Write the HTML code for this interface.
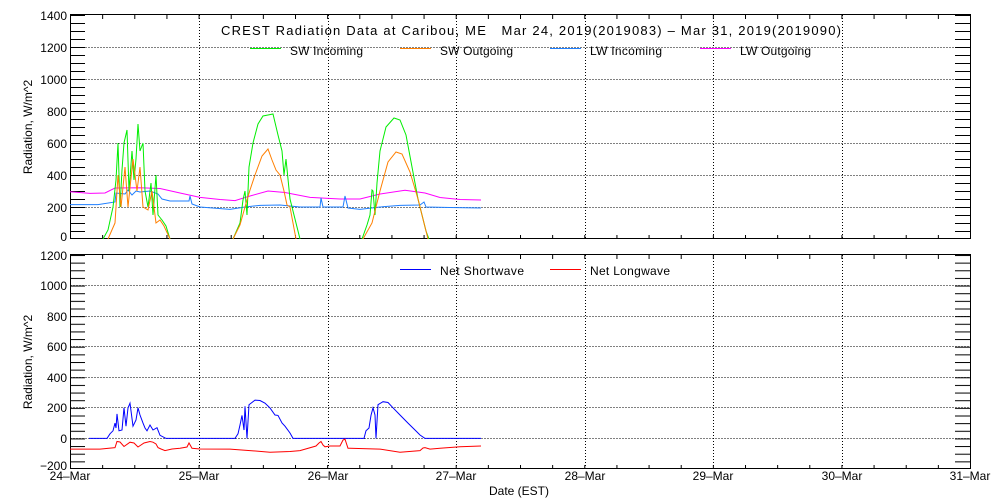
<!DOCTYPE html>
<html><head><meta charset="utf-8"><style>
html,body{margin:0;padding:0;background:#fff;}
svg{display:block;font-family:"Liberation Sans",sans-serif;font-size:12px;}
.pre{white-space:pre;}
</style></head><body>
<svg width="1000" height="500" viewBox="0 0 1000 500">
<defs>
<pattern id="ht" patternUnits="userSpaceOnUse" x="0" y="239" width="20" height="8"><rect x="0" y="0" width="20" height="1" fill="#000"/></pattern>
<pattern id="hb" patternUnits="userSpaceOnUse" x="0" y="469" width="20" height="7.643"><rect x="0" y="0" width="20" height="1" fill="#000"/></pattern>
<pattern id="vt" patternUnits="userSpaceOnUse" x="70" y="0" width="32.143" height="10"><rect x="0" y="0" width="1" height="10" fill="#000"/></pattern>
</defs>
<g fill="none" stroke="#000" stroke-width="1" stroke-dasharray="1,2">
<path d="M70.5 207.5H970M70.5 175.5H970M70.5 143.5H970M70.5 111.5H970M70.5 79.5H970M70.5 47.5H970"/>
<path d="M199.5 15V239M328.5 15V239M456.5 15V239M585.5 15V239M713.5 15V239M842.5 15V239"/>
<path d="M70.5 438.5H970M70.5 407.5H970M70.5 377.5H970M70.5 346.5H970M70.5 316.5H970M70.5 285.5H970"/>
<path d="M199.5 255V469M328.5 255V469M456.5 255V469M585.5 255V469M713.5 255V469M842.5 255V469"/>
</g>
<rect x="70" y="15" width="15" height="224" fill="url(#ht)"/>
<rect x="955" y="15" width="15" height="224" fill="url(#ht)"/>
<rect x="70" y="255" width="15" height="214" fill="url(#hb)"/>
<rect x="955" y="255" width="15" height="214" fill="url(#hb)"/>
<rect x="70" y="15" width="900" height="4" fill="url(#vt)"/>
<rect x="70" y="235" width="900" height="4" fill="url(#vt)"/>
<rect x="70" y="255" width="900" height="4" fill="url(#vt)"/>
<rect x="70" y="465" width="900" height="4" fill="url(#vt)"/>
<rect x="70.5" y="14.5" width="900" height="224" fill="none" stroke="#000"/>
<rect x="70.5" y="254.5" width="900" height="214" fill="none" stroke="#000"/>
<g fill="none" stroke-width="1">
<polyline stroke="#ff00ff" points="70,191.8 90,193.4 105,193 115,188 140,187.8 160,188.5 180,193 200,197.4 220,199.5 235,200.6 250,196 268,191 285,192.5 310,197.4 340,199 360,199 380,194 405,190.2 425,193 440,197.5 460,199.5 481,200"/>
<polyline stroke="#1e7fff" points="70,204.6 98,204.6 115,202 116,193 125,194 128,190 132,195 136,191 140,192 150,191 158,194 162,199 170,201 180,201 189,201 190,196 192,204 200,207 230,209.4 245,207 260,205.4 280,205 300,207 320,207 321,198 323,207 343,207 345,196 348,208 360,209.4 380,207 400,205.4 420,205 424,202 426,207 450,207.5 481,208"/>
<polyline stroke="#00ee00" points="103,239 108,230 113,207 116,180 118,143 120,207 122,170 124,143 127,130 129,191 132,151 134,180 136,159 138,124 140,151 143,143 145,191 148,207 151,183 153,215 156,175 158,215 162,220 166,226 170,239"/>
<polyline stroke="#00ee00" points="233,239 240,223 243,200 245,191 247,215 249,167 253,143 258,124 263,116 268,115 273,114 278,135 282,151 284,175 286,159 290,199 294,215 300,239"/>
<polyline stroke="#00ee00" points="362,239 367,225 370,215 372,190 373,191 375,215 377,183 380,151 386,127 394,118 400,120 406,135 412,167 418,199 422,215 426,231 429,239"/>
<polyline stroke="#ff7f00" points="108,239 115,223 118,175 121,207 125,167 128,207 133,159 137,191 140,167 143,207 148,210 152,191 156,223 160,220 164,226 170,239"/>
<polyline stroke="#ff7f00" points="233,239 240,225 245,207 250,190 255,175 262,156 268,149 272,160 276,170 280,175 284,191 287,205 290,207 296,239"/>
<polyline stroke="#ff7f00" points="363,239 372,223 380,191 388,162 396,152 402,154 410,172 418,199 424,223 428,239"/>
</g>
<g fill="none" stroke-width="1">
<polyline stroke="#0000ff" points="89,438.4 107,438.4 110,433.8 113,430.8 115,423.1 116,428 117,413.9 119,430.8 122,430 124,407.8 126,426.2 128,408 130,403.2 133,426.2 136,420 138,407.8 140,415 143,423.1 145,428 147,430.8 150,425 153,430 157,427.7 160,435.3 166,438.4 235,438.4 238,433.8 240,425 242,415.4 244,430 245,406.3 247,438.4 249,404.7 255,400.1 260,400.5 265,403.2 270,408 275,415 278,415.4 282,423 285,426.2 290,433 293,438.4 364,438.4 366,430.8 369,428 371,415.4 373,407.8 375,415 376,438.4 378,404.7 383,401.7 388,402.5 393,407.8 400,415 408,423.1 415,430 420,435 425,438.4 481,438.4"/>
<polyline stroke="#ff0000" points="70,449.1 100,449.1 115,447.6 117,441.5 120,442 124,446.5 130,442.2 134,443 138,447 144,443 150,441.5 153,442.2 156,444 158,447.6 161,449 165,450.6 172,449 180,448.3 187,447 189,443 192,448.3 200,449 230,449.1 250,450.6 270,452.2 290,451.5 300,450.6 316,446 319,443 321,441.5 323,445 325,446.8 330,446 340,446 343,440 345,439.2 348,448.3 350,448.3 380,449.1 400,452.2 420,450.6 423,448 425,447.6 430,449.1 440,448.3 460,446.8 481,446"/>
</g>
<g stroke-width="1">
<line x1="250" y1="48.5" x2="281" y2="48.5" stroke="#00ee00"/>
<line x1="400" y1="48.5" x2="431" y2="48.5" stroke="#ff7f00"/>
<line x1="550" y1="48.5" x2="581" y2="48.5" stroke="#1e7fff"/>
<line x1="700" y1="48.5" x2="731" y2="48.5" stroke="#ff00ff"/>
<line x1="400" y1="269.5" x2="431" y2="269.5" stroke="#0000ff"/>
<line x1="550" y1="269.5" x2="581" y2="269.5" stroke="#ff0000"/>
</g>
<g fill="#000">
<text class="pre" x="221" y="35" font-size="13" textLength="620" lengthAdjust="spacing">CREST Radiation Data at Caribou, ME   Mar 24, 2019(2019083) – Mar 31, 2019(2019090)</text>
<text x="290" y="55" textLength="73">SW Incoming</text>
<text x="440" y="55" textLength="73">SW Outgoing</text>
<text x="590" y="55" textLength="72">LW Incoming</text>
<text x="740" y="55" textLength="71">LW Outgoing</text>
<text x="440" y="275" textLength="84">Net Shortwave</text>
<text x="590" y="275" textLength="80">Net Longwave</text>
<g text-anchor="end">
<text x="67" y="20">1400</text><text x="67" y="52">1200</text><text x="67" y="84">1000</text><text x="67" y="116">800</text><text x="67" y="148">600</text><text x="67" y="180">400</text><text x="67" y="212">200</text><text x="67" y="241">0</text>
<text x="67" y="260">1200</text><text x="67" y="290">1000</text><text x="67" y="321">800</text><text x="67" y="351">600</text><text x="67" y="382">400</text><text x="67" y="412">200</text><text x="67" y="443">0</text><text x="67" y="470">−200</text>
</g>
<g text-anchor="middle">
<text x="70" y="480">24–Mar</text><text x="199" y="480">25–Mar</text><text x="328" y="480">26–Mar</text><text x="456" y="480">27–Mar</text><text x="585" y="480">28–Mar</text><text x="713" y="480">29–Mar</text><text x="842" y="480">30–Mar</text><text x="970" y="480">31–Mar</text>
<text x="519" y="495">Date (EST)</text>
<text transform="translate(32,127) rotate(-90)">Radiation, W/m^2</text>
<text transform="translate(32,362) rotate(-90)">Radiation, W/m^2</text>
</g>
</g>
</svg>
</body></html>
